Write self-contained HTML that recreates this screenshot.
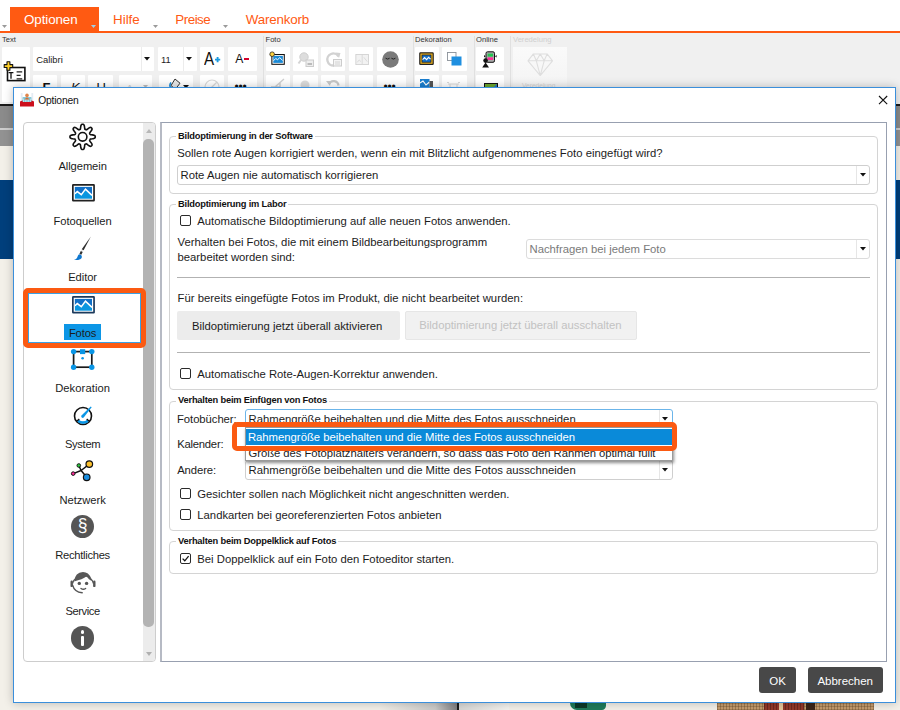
<!DOCTYPE html><html lang="de"><head><meta charset="utf-8"><title>Optionen</title><style>
*{box-sizing:border-box;margin:0;padding:0}
html,body{width:900px;height:710px;overflow:hidden;background:#f3f0e9;font-family:"Liberation Sans",sans-serif;color:#1c1c1c}
.b{position:absolute}
.t{position:absolute;white-space:nowrap;line-height:16px}
.tile{position:absolute;background:#fff;border-radius:1px}
.gb{position:absolute;border:1px solid #d4d4d4;border-radius:4px}
.gt{position:absolute;white-space:nowrap;line-height:16px;font-weight:700;font-size:9.3px;letter-spacing:-0.2px;background:#fff;padding:0 2px;color:#111}
.dd{position:absolute;border:1px solid #cfcfcf;border-radius:3px;background:#fff}
.cb{position:absolute;width:11px;height:11px;border:1.2px solid #2a2a2a;border-radius:2px;background:#fff}
.sep{position:absolute;height:1px;background:#b4b4b4}
svg{position:absolute;overflow:visible}
</style></head><body>
<div id="app" class="b" style="left:0;top:0;width:900px;height:710px">
<div class="b" style="left:0px;top:0px;width:900px;height:31px;background:#fff"></div>
<div class="b" style="left:10px;top:7px;width:89px;height:25px;background:#ff5a12"></div>
<div class="b" style="left:0px;top:31px;width:900px;height:2px;background:#ff5a12"></div>
<div class="t" style="left:24.00px;top:11.96px;font-size:13.4px;color:#fff;letter-spacing:-0.1px;">Optionen</div>
<div class="t" style="left:113.00px;top:11.96px;font-size:13.4px;color:#ff5a12;">Hilfe</div>
<div class="t" style="left:175.30px;top:11.96px;font-size:13.4px;color:#ff5a12;letter-spacing:-0.5px;">Preise</div>
<div class="t" style="left:245.80px;top:11.96px;font-size:13.4px;color:#ff5a12;letter-spacing:-0.2px;">Warenkorb</div>
<svg style="left:2.0px;top:25.0px" width="5" height="3" viewBox="0 0 5 3"><path d="M0 0H5L2.5 3Z" fill="#9a9a9a"/></svg>
<svg style="left:91.0px;top:25.0px" width="5" height="3" viewBox="0 0 5 3"><path d="M0 0H5L2.5 3Z" fill="#9fd0e8"/></svg>
<svg style="left:152.5px;top:25.0px" width="5" height="3" viewBox="0 0 5 3"><path d="M0 0H5L2.5 3Z" fill="#9a9a9a"/></svg>
<svg style="left:223.0px;top:25.0px" width="5" height="3" viewBox="0 0 5 3"><path d="M0 0H5L2.5 3Z" fill="#9a9a9a"/></svg>
<div class="b" style="left:0px;top:33px;width:900px;height:72px;background:#f0f0f0"></div>
<div class="b" style="left:0px;top:104px;width:900px;height:2px;background:#1a1a1a"></div>
<div class="b" style="left:0px;top:106px;width:900px;height:22px;background:#8b8b8b"></div>
<div class="b" style="left:0px;top:128px;width:900px;height:2px;background:#cdcdcd"></div>
<div class="b" style="left:0px;top:130px;width:900px;height:16px;background:#929292"></div>
<div class="b" style="left:0px;top:146px;width:900px;height:34px;background:#f3f0e9"></div>
<div class="b" style="left:0px;top:180px;width:900px;height:79px;background:#003f7c"></div>
<div class="t" style="left:2.00px;top:31.67px;font-size:7.6px;color:#333;">Text</div>
<div class="t" style="left:265.50px;top:31.67px;font-size:7.6px;color:#333;">Foto</div>
<div class="t" style="left:415.00px;top:31.67px;font-size:7.6px;color:#333;">Dekoration</div>
<div class="t" style="left:476.00px;top:31.67px;font-size:7.6px;color:#333;">Online</div>
<div class="t" style="left:513.00px;top:31.67px;font-size:7.6px;color:#cfcfcf;">Veredelung</div>
<div class="b" style="left:263px;top:36px;width:1px;height:70px;background:#e0e0e0"></div>
<div class="b" style="left:412.5px;top:36px;width:1px;height:70px;background:#e0e0e0"></div>
<div class="b" style="left:473.5px;top:36px;width:1px;height:70px;background:#e0e0e0"></div>
<div class="b" style="left:510px;top:36px;width:1px;height:70px;background:#e0e0e0"></div>
<div class="tile" style="left:2px;top:47px;width:27.5px;height:55px"></div>
<div class="tile" style="left:33px;top:47px;width:121px;height:24px"></div>
<div class="b" style="left:140.5px;top:47px;width:1px;height:24px;background:#ececec"></div>
<div class="tile" style="left:157.5px;top:47px;width:39px;height:24px"></div>
<div class="b" style="left:183px;top:47px;width:1px;height:24px;background:#ececec"></div>
<div class="tile" style="left:200px;top:47px;width:24.4px;height:24px"></div>
<div class="tile" style="left:228px;top:47px;width:28.5px;height:24px"></div>
<div class="tile" style="left:33px;top:74.5px;width:24.4px;height:26px"></div>
<div class="tile" style="left:60.7px;top:74.5px;width:24.4px;height:26px"></div>
<div class="tile" style="left:88.4px;top:74.5px;width:24.4px;height:26px"></div>
<div class="tile" style="left:119px;top:74.5px;width:32.5px;height:26px"></div>
<div class="tile" style="left:159px;top:74.5px;width:34px;height:26px"></div>
<div class="tile" style="left:200px;top:74.5px;width:24.4px;height:26px"></div>
<div class="tile" style="left:228px;top:74.5px;width:28.5px;height:26px"></div>
<div class="tile" style="left:265.6px;top:47px;width:24.4px;height:24px"></div>
<div class="tile" style="left:265.6px;top:74.5px;width:24.4px;height:26px"></div>
<div class="tile" style="left:293.3px;top:47px;width:24.4px;height:24px"></div>
<div class="tile" style="left:293.3px;top:74.5px;width:24.4px;height:26px"></div>
<div class="tile" style="left:321.1px;top:47px;width:24.4px;height:24px"></div>
<div class="tile" style="left:321.1px;top:74.5px;width:24.4px;height:26px"></div>
<div class="tile" style="left:348.9px;top:47px;width:24.4px;height:24px"></div>
<div class="tile" style="left:348.9px;top:74.5px;width:24.4px;height:26px"></div>
<div class="tile" style="left:376.7px;top:47px;width:29px;height:24px"></div>
<div class="tile" style="left:376.7px;top:74.5px;width:29px;height:26px"></div>
<div class="tile" style="left:415px;top:47px;width:24.4px;height:24px"></div>
<div class="tile" style="left:415px;top:74.5px;width:24.4px;height:26px"></div>
<div class="tile" style="left:442.3px;top:47px;width:24.4px;height:24px"></div>
<div class="tile" style="left:442.3px;top:74.5px;width:24.4px;height:26px"></div>
<div class="tile" style="left:476px;top:47px;width:27.5px;height:24px"></div>
<div class="tile" style="left:476px;top:74.5px;width:27.5px;height:26px"></div>
<div class="b" style="left:513px;top:47px;width:54px;height:55px;background:linear-gradient(#fafafa,#f5f5f5 60%,#f1f1f1)"></div>
<div class="t" style="left:36.20px;top:51.94px;font-size:9.4px;color:#222;">Calibri</div>
<div class="t" style="left:161.00px;top:51.94px;font-size:9.4px;color:#222;">11</div>
<svg style="left:143.7px;top:57.3px" width="6" height="3.4" viewBox="0 0 6 3.4"><path d="M0 0H6L3.0 3.4Z" fill="#111"/></svg>
<svg style="left:186.4px;top:57.3px" width="6" height="3.4" viewBox="0 0 6 3.4"><path d="M0 0H6L3.0 3.4Z" fill="#111"/></svg>
<div class="t" style="left:204.30px;top:50.60px;font-size:17.6px;color:#111;transform:scaleX(.86);transform-origin:0 0;">A</div>
<svg style="left:215px;top:56.600px" width="5.200" height="5.200" viewBox="0 0 5.200 5.200"><path d="M2.600 0v5.200M0 2.600h5.200" stroke="#1a9be0" stroke-width="1.900"/></svg>
<div class="t" style="left:235.30px;top:50.81px;font-size:12.1px;color:#111;">A</div>
<div class="b" style="left:244.3px;top:58px;width:4.6px;height:1.7px;background:#d4002a"></div>
<div class="t" style="left:42.50px;top:79.50px;font-size:13px;color:#111;font-weight:700;">F</div>
<div class="t" style="left:71.00px;top:79.50px;font-size:13px;color:#111;font-style:italic;">K</div>
<div class="t" style="left:96.50px;top:79.50px;font-size:13px;color:#111;">U</div>
<div class="t" style="left:127.00px;top:80.23px;font-size:8px;color:#ccc;">A</div>
<svg style="left:143.0px;top:85.0px" width="5" height="3" viewBox="0 0 5 3"><path d="M0 0H5L2.5 3Z" fill="#bbb"/></svg>
<svg style="left:183.0px;top:84.8px" width="6" height="3.4" viewBox="0 0 6 3.4"><path d="M0 0H6L3.0 3.4Z" fill="#111"/></svg>
<svg style="left:0;top:0" width="900" height="710">
<rect x="7.500" y="67.500" width="17.400" height="13.100" fill="#fff" stroke="#111" stroke-width="1.600"/>
<path d="M8.600 72.600h4.800M11 72.600v6.200" stroke="#111" stroke-width="1.300" fill="none"/>
<path d="M16.600 71.800h5.600M16.600 75.400h4M16.600 78.800h5.600" stroke="#222" stroke-width="1.200" fill="none"/>
<path d="M7 61.800h2.900v2.800h2.800v2.900H9.900v2.800H7v-2.800H4.200v-2.900H7z" fill="#ffd028" stroke="#111" stroke-width="1.100" stroke-linejoin="round"/></svg>
<svg style="left:269px;top:51.200px" width="16.400" height="14.200" viewBox="0 0 18 16">
<rect x="3" y="4" width="14" height="11" fill="#fff" stroke="#111" stroke-width="1.2"/>
<rect x="4.6" y="5.6" width="10.8" height="7.8" fill="#1b8ad6"/>
<path d="M4.8 11l2.6-2.6 2 1.6 2.4-2.6 3.4 3.4" stroke="#fff" stroke-width="1.1" fill="none"/>
<circle cx="3.3" cy="3.6" r="2.6" fill="#ffd23c" stroke="#111" stroke-width=".8"/></svg>
<svg style="left:297px;top:51px" width="18" height="17" viewBox="0 0 18 17"><circle cx="7" cy="6" r="4.2" fill="#ddd" stroke="#cfcfcf"/><path d="M4 9L1.5 12.5" stroke="#d4d4d4" stroke-width="2"/><rect x="9" y="9" width="7.5" height="6.5" fill="#eee" stroke="#ccc"/><rect x="10.5" y="12" width="4.5" height="2" fill="#bbb"/></svg>
<svg style="left:325px;top:50px" width="18" height="18" viewBox="0 0 18 18"><path d="M13.5 6.5A6 6 0 1 0 9 15.5" fill="none" stroke="#d2d2d2" stroke-width="2.4"/><path d="M10.5 2.5l5 .5-1.5 5z" fill="#d2d2d2"/><rect x="8.5" y="9.5" width="8" height="6.5" fill="#f4f4f4" stroke="#ccc"/><path d="M10 12h5M10 14h5" stroke="#ccc" stroke-width=".8"/></svg>
<svg style="left:354.500px;top:54px" width="14.400" height="11" viewBox="0 0 16 13"><rect x=".5" y=".5" width="15" height="12" fill="#f2f2f2" stroke="#d0d0d0"/><path d="M8 .5v12M2 10l2.5-3 2 2M10 4l4 5" stroke="#d6d6d6" fill="none"/></svg>
<svg style="left:382px;top:50.5px" width="17" height="17" viewBox="0 0 17 17"><circle cx="8.5" cy="8.5" r="8.3" fill="#7a7a7a"/><path d="M3.6 7.2q2 1.8 4 0M9.4 7.2q2 1.8 4 0" stroke="#222" stroke-width="1" fill="none"/></svg>
<svg style="left:419px;top:52px" width="15" height="13.200" viewBox="0 0 15 13.200"><rect x=".8" y=".8" width="13.400" height="11.600" rx=".6" fill="#f6b81c" stroke="#222" stroke-width="1.200"/><rect x="3" y="3" width="9" height="7.200" fill="#1570c8" stroke="#222" stroke-width=".8"/><path d="M3.600 7.600l2-2 2 2 2-2.200 2 1.800" stroke="#fff" stroke-width="1.100" fill="none"/></svg>
<svg style="left:447px;top:52px" width="15" height="14" viewBox="0 0 15 14"><rect x=".5" y=".5" width="8.5" height="8" fill="#fff" stroke="#8a9199" stroke-width=".9"/><rect x="4.5" y="4.5" width="10" height="9" fill="#1f8fe0"/></svg>
<svg style="left:480px;top:51px" width="18" height="17" viewBox="0 0 18 17"><rect x="6" y=".8" width="8.5" height="10.5" rx="1.5" fill="#aaa" stroke="#111" stroke-width="1"/><rect x="7.6" y="2.6" width="5.4" height="3" fill="#23c552"/><rect x="7.6" y="6.4" width="5.4" height="2.6" fill="#ff2e9a"/><path d="M4 4l1.6 1.2L4 6.4zM16.6 4L15 5.2l1.6 1.2z" fill="#111"/><circle cx="5.6" cy="9.6" r="2.3" fill="#111"/><path d="M2.2 16.6l3.4-5.2 3.4 5.2z" fill="#111"/></svg>
<svg style="left:420px;top:79px" width="14" height="12" viewBox="0 0 14 12"><rect x="0" y="0" width="9.5" height="12" fill="#1b7fd0"/><path d="M0 4l3-2 3 4 3.5-3" stroke="#fff" stroke-width="1.2" fill="none"/><rect x="9.5" y="2" width="3.5" height="10" fill="#555"/></svg>
<svg style="left:484px;top:83px" width="14" height="8" viewBox="0 0 14 8"><rect x=".5" y=".5" width="13" height="8" fill="#6aa62c" stroke="#111"/><path d="M6 8l7-7v7z" fill="#1f6fd0"/></svg>
<svg style="left:447px;top:81.500px" width="13" height="9" viewBox="0 0 13 9"><path d="M1 2h11M3 2v7M10 2v7M0 .5h2M11 .5h2" stroke="#d8d8d8" fill="none"/></svg>
<svg style="left:167.500px;top:78px" width="14" height="12" viewBox="0 0 14 12"><path d="M7 1l5 4.2-4.6 6L3 7.6z" fill="#e8e8e8" stroke="#333" stroke-width="1"/><path d="M3 4.5q-2.2 3 0 5.5" stroke="#1b8ad6" stroke-width="1.6" fill="none"/></svg>
<svg style="left:204px;top:79px" width="16" height="12" viewBox="0 0 16 12"><circle cx="8" cy="8" r="7" fill="none" stroke="#d8d8d8" stroke-width="1.2"/><path d="M3 13L13 3" stroke="#d8d8d8" stroke-width="1.2"/></svg>
<div class="t" style="left:234.50px;top:79.34px;font-size:12px;color:#111;letter-spacing:-0.2px;">•••</div>
<div class="t" style="left:383.50px;top:79.34px;font-size:12px;color:#111;letter-spacing:-0.2px;">•••</div>
<svg style="left:270px;top:78px" width="16" height="10" viewBox="0 0 16 10"><path d="M1 9h9V4M5 9l9-8" stroke="#d0d0d0" stroke-width="1.4" fill="none"/></svg>
<svg style="left:299px;top:79px" width="12" height="10" viewBox="0 0 12 10"><circle cx="6" cy="6" r="4.5" fill="#dcdcdc"/></svg>
<svg style="left:326px;top:78px" width="14" height="10" viewBox="0 0 14 10"><path d="M3 6a5 5 0 0 1 9.5 1.5" fill="none" stroke="#c8c8c8" stroke-width="2.2"/><path d="M0 3l5 0-1 5z" fill="#c8c8c8"/></svg>
<svg style="left:526.500px;top:52px" width="26.500" height="25.500" viewBox="0 0 27 24"><path d="M6.5 1h14L26 8 13.5 23 1 8zM1 8h25M6.5 1l3 7 4 15M20.500 1l-3 7-4 15M9.500 8l4-7 4 7" fill="none" stroke="#dedede" stroke-width="1.1" stroke-linejoin="round"/></svg>
<div class="t" style="left:522.00px;top:78.21px;font-size:6.6px;color:#d4d4d4;">Veredelung</div>
<div class="b" style="left:380px;top:703px;width:79px;height:7px;background:linear-gradient(90deg,#f1eee7,#c9c9c7 70%,#77777a)"></div>
<div class="b" style="left:457px;top:703px;width:2px;height:7px;background:#1c1c1c"></div>
<div class="b" style="left:459px;top:703px;width:50px;height:7px;background:linear-gradient(90deg,#d6d6d4,#f4f3ef)"></div>
<div class="b" style="left:570px;top:703px;width:36px;height:7px;background:#1f7a5a;border-radius:0 0 6px 10px"></div>
<div class="b" style="left:575px;top:703px;width:12px;height:5px;background:#0c3a2a"></div>
<div class="b" style="left:716.5px;top:703px;width:157px;height:7px;background:repeating-linear-gradient(90deg,rgba(90,60,30,.35) 0 1px,transparent 1px 3px),repeating-linear-gradient(0deg,rgba(90,60,30,.3) 0 1px,transparent 1px 3px),#c49c6e"></div>
<div class="b" style="left:764px;top:703px;width:40px;height:7px;background:repeating-linear-gradient(90deg,rgba(40,10,10,.35) 0 1px,transparent 1px 3px),#92382a"></div>
<div class="b" style="left:779px;top:703px;width:3.5px;height:7px;background:#e4c49a"></div>
<div class="b" style="left:806px;top:703px;width:9px;height:7px;background:#3a2418"></div>
</div>
<div id="dlg" class="b" style="left:13px;top:87px;width:883px;height:616px;background:#fff;border:1px solid #3b8fdb;box-shadow:0 0 9px rgba(0,0,0,.24)"></div>
<svg style="left:20px;top:93px" width="14" height="14" viewBox="0 0 14 14"><rect x="0.800" y="0" width="1.800" height="8" fill="#e4ecf4"/><rect x="11.400" y="0" width="1.800" height="8" fill="#e4ecf4"/><path d="M0 8.600l2.400-1.200h9.200L14 8.600V13.500H0z" fill="#cc0f1c"/><rect x="2.600" y="4.200" width="8.800" height="4.800" fill="#6cbcd0"/><path d="M3.600 9V5.500M5.300 9V5.500M7 9V5.500M8.700 9V5.500M10.400 9V5.500" stroke="#e8f4f8" stroke-width=".7"/><circle cx="7" cy="2.400" r="1.800" fill="#e0854a"/><path d="M4.600 6.400q2.400-3.600 4.800 0z" fill="#d07038"/></svg>
<div class="t" style="left:38.20px;top:92.73px;font-size:10.3px;color:#111;letter-spacing:-0.18px;">Optionen</div>
<svg style="left:878.700px;top:95.900px" width="8.2" height="8.200" viewBox="0 0 8.200 8.200"><path d="M0 0L8.200 8.200M8.200 0L0 8.200" stroke="#111" stroke-width="1.100"/></svg>
<div class="b" style="left:23px;top:122px;width:133px;height:540px;border:1px solid #cdcdcd;border-radius:4px;background:#fff"></div>
<div class="b" style="left:142.8px;top:123px;width:12.2px;height:538px;background:#ececec;border-radius:0 3px 3px 0"></div>
<div class="b" style="left:143.4px;top:138.5px;width:10.2px;height:488.5px;background:#b3b3b3;border-radius:5px"></div>
<svg style="left:146px;top:129px" width="6" height="4" viewBox="0 0 6 4"><path d="M0 4H6L3 0Z" fill="#b8b8b8"/></svg>
<svg style="left:146px;top:651.500px" width="6" height="4" viewBox="0 0 6 4"><path d="M0 0H6L3 4Z" fill="#b0b0b0"/></svg>
<div class="b" style="left:28px;top:292.5px;width:112.5px;height:50px;border:1px solid #3aa0e4;background:#fff"></div>
<div class="b" style="left:64.3px;top:324.3px;width:37.2px;height:15.7px;background:#0c96e6"></div>
<div class="t" style="left:-67.40px;width:300px;text-align:center;top:157.52px;font-size:11.2px;letter-spacing:-0.08px;">Allgemein</div>
<div class="t" style="left:-67.40px;width:300px;text-align:center;top:212.92px;font-size:11.2px;letter-spacing:-0.03px;">Fotoquellen</div>
<div class="t" style="left:-67.40px;width:300px;text-align:center;top:268.82px;font-size:11.2px;letter-spacing:-0.08px;">Editor</div>
<div class="t" style="left:-67.40px;width:300px;text-align:center;top:324.62px;font-size:11.2px;letter-spacing:-0.12px;">Fotos</div>
<div class="t" style="left:-67.40px;width:300px;text-align:center;top:379.92px;font-size:11.2px;letter-spacing:0.08px;">Dekoration</div>
<div class="t" style="left:-67.40px;width:300px;text-align:center;top:435.82px;font-size:11.2px;letter-spacing:-0.32px;">System</div>
<div class="t" style="left:-67.40px;width:300px;text-align:center;top:491.62px;font-size:11.2px;letter-spacing:-0.05px;">Netzwerk</div>
<div class="t" style="left:-67.40px;width:300px;text-align:center;top:547.02px;font-size:11.2px;letter-spacing:-0.3px;">Rechtliches</div>
<div class="t" style="left:-67.40px;width:300px;text-align:center;top:602.72px;font-size:11.2px;letter-spacing:-0.46px;">Service</div>
<svg style="left:0;top:0" width="900" height="710"><path d="M82.60 124.21 L83.10 124.24 L83.58 124.42 L84.01 124.93 L84.34 125.88 L84.54 127.09 L84.67 128.22 L84.82 128.99 L85.03 129.36 L85.31 129.50 L85.60 129.61 L85.88 129.74 L86.18 129.83 L86.59 129.72 L87.24 129.29 L88.13 128.58 L89.13 127.86 L90.03 127.43 L90.70 127.37 L91.16 127.59 L91.54 127.91 L91.86 128.29 L92.08 128.75 L92.02 129.42 L91.59 130.32 L90.87 131.32 L90.16 132.21 L89.73 132.86 L89.62 133.27 L89.71 133.57 L89.84 133.85 L89.95 134.14 L90.09 134.42 L90.46 134.63 L91.23 134.78 L92.36 134.91 L93.57 135.11 L94.52 135.44 L95.03 135.87 L95.21 136.35 L95.24 136.85 L95.21 137.35 L95.03 137.83 L94.52 138.26 L93.57 138.59 L92.36 138.79 L91.23 138.92 L90.46 139.07 L90.09 139.28 L89.95 139.56 L89.84 139.85 L89.71 140.13 L89.62 140.43 L89.73 140.84 L90.16 141.49 L90.87 142.38 L91.59 143.38 L92.02 144.28 L92.08 144.95 L91.86 145.41 L91.54 145.79 L91.16 146.11 L90.70 146.33 L90.03 146.27 L89.13 145.84 L88.13 145.12 L87.24 144.41 L86.59 143.98 L86.18 143.87 L85.88 143.96 L85.60 144.09 L85.31 144.20 L85.03 144.34 L84.82 144.71 L84.67 145.48 L84.54 146.61 L84.34 147.82 L84.01 148.77 L83.58 149.28 L83.10 149.46 L82.60 149.49 L82.10 149.46 L81.62 149.28 L81.19 148.77 L80.86 147.82 L80.66 146.61 L80.53 145.48 L80.38 144.71 L80.17 144.34 L79.89 144.20 L79.60 144.09 L79.32 143.96 L79.02 143.87 L78.61 143.98 L77.96 144.41 L77.07 145.12 L76.07 145.84 L75.17 146.27 L74.50 146.33 L74.04 146.11 L73.66 145.79 L73.34 145.41 L73.12 144.95 L73.18 144.28 L73.61 143.38 L74.33 142.38 L75.04 141.49 L75.47 140.84 L75.58 140.43 L75.49 140.13 L75.36 139.85 L75.25 139.56 L75.11 139.28 L74.74 139.07 L73.97 138.92 L72.84 138.79 L71.63 138.59 L70.68 138.26 L70.17 137.83 L69.99 137.35 L69.96 136.85 L69.99 136.35 L70.17 135.87 L70.68 135.44 L71.63 135.11 L72.84 134.91 L73.97 134.78 L74.74 134.63 L75.11 134.42 L75.25 134.14 L75.36 133.85 L75.49 133.57 L75.58 133.27 L75.47 132.86 L75.04 132.21 L74.33 131.32 L73.61 130.32 L73.18 129.42 L73.12 128.75 L73.34 128.29 L73.66 127.91 L74.04 127.59 L74.50 127.37 L75.17 127.43 L76.07 127.86 L77.07 128.58 L77.96 129.29 L78.61 129.72 L79.02 129.83 L79.32 129.74 L79.60 129.61 L79.89 129.50 L80.17 129.36 L80.38 128.99 L80.53 128.22 L80.66 127.09 L80.86 125.88 L81.19 124.93 L81.62 124.42 L82.10 124.24Z" fill="#fff" stroke="#111" stroke-width="1.600" stroke-linejoin="round"/><circle cx="82.6" cy="136.85" r="4.3" fill="#fff" stroke="#111" stroke-width="1.600"/></svg>
<svg style="left:72px;top:184.2px" width="23" height="17.500" viewBox="0 0 23 17.500"><rect x=".85" y=".85" width="21.200" height="15.700" rx=".4" fill="#fff" stroke="#222" stroke-width="1.700"/><rect x="2.900" y="2.900" width="17.100" height="11.800" fill="#0a96e0"/><path d="M2.900 2.900h17.100v8.500l-6.500-6.300-4.200 5.600-4-3.100-2.400 2.200z" fill="#1070c8"/><path d="M2.900 9.800l2.400-2.200 4 3.100 4.200-5.600 6.500 6.300" stroke="#fff" stroke-width="1.500" fill="none"/></svg>
<svg style="left:72px;top:295.8px" width="23" height="17.500" viewBox="0 0 23 17.500"><rect x=".85" y=".85" width="21.200" height="15.700" rx=".4" fill="#fff" stroke="#1c3a5c" stroke-width="1.700"/><rect x="2.900" y="2.900" width="17.100" height="11.800" fill="#0a96e0"/><path d="M2.900 2.900h17.100v8.500l-6.500-6.300-4.200 5.600-4-3.100-2.400 2.200z" fill="#1070c8"/><path d="M2.900 9.800l2.400-2.200 4 3.100 4.200-5.600 6.500 6.300" stroke="#fff" stroke-width="1.500" fill="none"/></svg>
<svg style="left:0;top:0" width="900" height="710"><path d="M90.900 236.500L83.600 250.300L81.700 249.300Z" fill="#2e2e2e"/><path d="M83.300 250.800L81.400 249.900L81 250.700L82.900 251.600Z" fill="#ddd"/><path d="M82.700 251.900L80.800 251L79.400 253.900L81.300 254.800Z" fill="#2e2e2e"/><path d="M81.400 255.200q1.400 2.600-1.200 4-2.600 1.200-6.200.8 2.600-1 3.200-2.600.6-2.800 2.400-3.200z" fill="#0f78d0"/></svg>
<svg style="left:0;top:0" width="900" height="710"><rect x="73.600" y="351.600" width="18.200" height="15.600" fill="#fff" stroke="#1a1a1a" stroke-width="1.700"/><circle cx="73.600" cy="351.600" r="2.700" fill="#0a96e6"/><circle cx="91.800" cy="351.600" r="2.700" fill="#0a96e6"/><circle cx="73.600" cy="367.200" r="2.700" fill="#0a96e6"/><circle cx="91.800" cy="367.200" r="2.700" fill="#0a96e6"/><rect x="80" y="349.200" width="5.200" height="4.900" fill="#0a96e6"/><circle cx="82.600" cy="358.200" r="1.300" fill="#0a96e6"/></svg>
<svg style="left:82.600px;top:416.300px" width="1" height="1" viewBox="0 0 1 1"><circle cx="0" cy="0" r="8.500" fill="#fff" stroke="#111" stroke-width="1.600"/><path d="M-6.200 5.200A8.100 8.100 0 0 0 6.200 5.200L4.100 3.450A5.400 5.400 0 0 1 -4.100 3.450Z" fill="#0a96e6"/><path d="M-6.600 5.600L-3.700 3.100M6.600 5.600L3.700 3.100" stroke="#111" stroke-width="1.300"/><path d="M-1.500 -.5L7.700 -9.600L8.700 -8.700L.7 1.500A1.500 1.500 0 0 1 -1.500 -.5Z" fill="#0a96e6"/></svg>
<svg style="left:0;top:0" width="900" height="710"><path d="M81.100 470.500L89.300 464.100M81.100 470.500L86.700 477.300M81.100 470.500L78.800 465.500M81.100 470.500L73.200 473.600" stroke="#111" stroke-width="1.500"/><circle cx="89.300" cy="464.100" r="3.300" fill="#fbc02d" stroke="#111" stroke-width="1.200"/><circle cx="86.700" cy="477.300" r="3.300" fill="#1a8ee0" stroke="#111" stroke-width="1.200"/><circle cx="78.800" cy="465.500" r="1.800" fill="#2ecc40" stroke="#111" stroke-width="1"/><circle cx="73.200" cy="473.600" r="1.800" fill="#ff2e9a" stroke="#111" stroke-width="1"/></svg>
<div class="b" style="left:70.7px;top:514.5px;width:23.6px;height:23.6px;background:#555;border-radius:50%"></div>
<div class="t" style="left:-67.50px;width:300px;text-align:center;top:517.24px;font-size:17.5px;color:#fff;">§</div>
<svg style="left:82.700px;top:582.300px" width="1" height="1" viewBox="0 0 1 1"><path d="M-10.500 1.500A10.900 10.900 0 0 1 10.500 1.500" fill="none" stroke="#555" stroke-width="1.300"/><path d="M-8.800 -.600q.8-8.900 8.800-9.300 5.600 0 8.200 6.400l.4 2.600q-3.600-1.600-4.700-5-4.600 3.700-12.700 5.300z" fill="#585858"/><path d="M-11.300 -.3v4.200M11.300 -.3v4.200" stroke="#555" stroke-width="2.400" stroke-linecap="round"/><path d="M-10.400 3.200q1.800 7 9.600 7.600" fill="none" stroke="#555" stroke-width="1.400" stroke-linecap="round"/><circle cx="-3.700" cy="1.400" r="1.700" fill="#555"/><circle cx="3.600" cy="1.400" r="1.700" fill="#555"/><path d="M-2 6.500q2.300 1.600 4.600 0" stroke="#555" stroke-width="1.400" fill="none" stroke-linecap="round"/></svg>
<div class="b" style="left:70.7px;top:626.2px;width:23.6px;height:23.6px;background:#555;border-radius:50%"></div>
<div class="b" style="left:80.9px;top:635.8px;width:3.3px;height:10.2px;background:#fff;border-radius:1px"></div>
<div class="b" style="left:80.6px;top:629.8px;width:3.9px;height:3.9px;background:#fff;border-radius:50%"></div>
<div class="b" style="left:23px;top:288px;width:122.5px;height:59.5px;border:5px solid #fb5a12;border-radius:5px"></div>
<div class="b" style="left:160px;top:122px;width:726.5px;height:540px;border:1px solid #98a0b0;border-left:2px solid #b6bac4;background:#fff"></div>
<div class="gb" style="left:169px;top:136.2px;width:709px;height:57.60000000000002px"></div><div class="gt" style="left:176px;top:127.94px">Bildoptimierung in der Software</div>
<div class="gb" style="left:169px;top:204px;width:709px;height:186.3px"></div><div class="gt" style="left:176px;top:195.74px">Bildoptimierung im Labor</div>
<div class="gb" style="left:169px;top:400.5px;width:709px;height:130.5px"></div><div class="gt" style="left:176px;top:392.24px">Verhalten beim Einfügen von Fotos</div>
<div class="gb" style="left:169px;top:541.2px;width:709px;height:32.799999999999955px"></div><div class="gt" style="left:176px;top:532.94px">Verhalten beim Doppelklick auf Fotos</div>
<div class="t" style="left:177.20px;top:144.78px;font-size:11.3px;letter-spacing:0.02px;">Sollen rote Augen korrigiert werden, wenn ein mit Blitzlicht aufgenommenes Foto eingefügt wird?</div>
<div class="dd" style="left:177px;top:165px;width:693px;height:20px;border-color:#cfcfcf"></div><div class="b" style="left:856px;top:166px;width:1px;height:18px;background:#e6e6e6"></div><svg style="left:859.8px;top:173.3px" width="6" height="3.4" viewBox="0 0 6 3.4"><path d="M0 0H6L3.0 3.4Z" fill="#111"/></svg><div class="t" style="left:180.50px;top:166.88px;font-size:11.3px;">Rote Augen nie automatisch korrigieren</div>
<div class="cb" style="left:180px;top:215px"></div>
<div class="t" style="left:197.30px;top:213.08px;font-size:11.3px;">Automatische Bildoptimierung auf alle neuen Fotos anwenden.</div>
<div class="t" style="left:177.50px;top:233.68px;font-size:11.3px;">Verhalten bei Fotos, die mit einem Bildbearbeitungsprogramm</div>
<div class="t" style="left:177.50px;top:249.28px;font-size:11.3px;">bearbeitet worden sind:</div>
<div class="dd" style="left:526px;top:238.5px;width:344px;height:20px;border-color:#dcdcdc"></div><div class="b" style="left:856px;top:239.5px;width:1px;height:18px;background:#e6e6e6"></div><svg style="left:859.8px;top:246.8px" width="6" height="3.4" viewBox="0 0 6 3.4"><path d="M0 0H6L3.0 3.4Z" fill="#111"/></svg><div class="t" style="left:529.50px;top:240.68px;font-size:11.3px;color:#7a7a7a;">Nachfragen bei jedem Foto</div>
<div class="b" style="left:177px;top:276.5px;width:693px;height:1px;background:#b2b2b2"></div>
<div class="t" style="left:177.50px;top:290.08px;font-size:11.3px;letter-spacing:0.03px;">Für bereits eingefügte Fotos im Produkt, die nicht bearbeitet wurden:</div>
<div class="b" style="left:177px;top:310.5px;width:222.5px;height:29px;background:#ececec;border-radius:2px"></div>
<div class="t" style="left:192.00px;top:317.58px;font-size:11.3px;">Bildoptimierung jetzt überall aktivieren</div>
<div class="b" style="left:405px;top:310.5px;width:232px;height:29px;background:#f1f1f1;border:1px solid #e6e6e6;border-radius:2px"></div>
<div class="t" style="left:419.30px;top:317.28px;font-size:11.3px;color:#c2c2c2;">Bildoptimierung jetzt überall ausschalten</div>
<div class="b" style="left:177px;top:352px;width:693px;height:1px;background:#b2b2b2"></div>
<div class="cb" style="left:180px;top:368px"></div>
<div class="t" style="left:197.30px;top:365.68px;font-size:11.3px;">Automatische Rote-Augen-Korrektur anwenden.</div>
<div class="t" style="left:177.00px;top:410.58px;font-size:11.3px;letter-spacing:-0.06px;">Fotobücher:</div>
<div class="t" style="left:177.20px;top:436.08px;font-size:11.3px;letter-spacing:-0.25px;">Kalender:</div>
<div class="t" style="left:177.20px;top:462.08px;font-size:11.3px;letter-spacing:-0.1px;">Andere:</div>
<div class="dd" style="left:245px;top:408.5px;width:427.5px;height:20px;border-color:#6bb5ea"></div><div class="b" style="left:658.5px;top:409.5px;width:1px;height:18px;background:#e6e6e6"></div><svg style="left:662.3px;top:416.8px" width="6" height="3.4" viewBox="0 0 6 3.4"><path d="M0 0H6L3.0 3.4Z" fill="#111"/></svg><div class="t" style="left:248.50px;top:411.08px;font-size:11.3px;">Rahmengröße beibehalten und die Mitte des Fotos ausschneiden</div>
<div class="dd" style="left:245px;top:459.5px;width:427.5px;height:20px;border-color:#cfcfcf"></div><div class="b" style="left:658.5px;top:460.5px;width:1px;height:18px;background:#e6e6e6"></div><svg style="left:662.3px;top:467.8px" width="6" height="3.4" viewBox="0 0 6 3.4"><path d="M0 0H6L3.0 3.4Z" fill="#111"/></svg><div class="t" style="left:248.50px;top:462.08px;font-size:11.3px;">Rahmengröße beibehalten und die Mitte des Fotos ausschneiden</div>
<div class="b" style="left:245px;top:427px;width:428px;height:34px;background:#fff;border:1px solid #9a9a9a;box-shadow:1px 2px 3px rgba(0,0,0,.45)"></div>
<div class="b" style="left:246px;top:428.7px;width:426px;height:16px;background:#0a8ad9"></div>
<div class="t" style="left:247.90px;top:429.38px;font-size:11.3px;color:#fff;">Rahmengröße beibehalten und die Mitte des Fotos ausschneiden</div>
<div class="t" style="left:248.50px;top:444.68px;font-size:11.3px;letter-spacing:-0.055px;">Größe des Fotoplatzhalters verändern, so dass das Foto den Rahmen optimal füllt</div>
<div class="cb" style="left:180px;top:488px"></div>
<div class="t" style="left:197.30px;top:486.08px;font-size:11.3px;">Gesichter sollen nach Möglichkeit nicht angeschnitten werden.</div>
<div class="cb" style="left:180px;top:509.4px"></div>
<div class="t" style="left:197.30px;top:507.38px;font-size:11.3px;">Landkarten bei georeferenzierten Fotos anbieten</div>
<div class="cb" style="left:180px;top:553px"></div><svg style="left:180px;top:553px" width="11" height="11" viewBox="0 0 11 11"><path d="M2.600 5.600l2.200 2.200 3.800-4.600" stroke="#111" stroke-width="1.300" fill="none"/></svg>
<div class="t" style="left:197.30px;top:550.78px;font-size:11.3px;">Bei Doppelklick auf ein Foto den Fotoeditor starten.</div>
<div class="b" style="left:232px;top:422px;width:444.5px;height:29px;border:5px solid #fb5a12;border-radius:5px"></div>
<div class="b" style="left:759px;top:666.7px;width:37px;height:26.6px;background:#484848;border-radius:3px"></div>
<div class="t" style="left:627.50px;width:300px;text-align:center;top:672.52px;font-size:11.5px;color:#fff;">OK</div>
<div class="b" style="left:807.5px;top:666.7px;width:75.5px;height:26.6px;background:#484848;border-radius:3px"></div>
<div class="t" style="left:695.20px;width:300px;text-align:center;top:672.52px;font-size:11.5px;color:#fff;">Abbrechen</div>
</body></html>
